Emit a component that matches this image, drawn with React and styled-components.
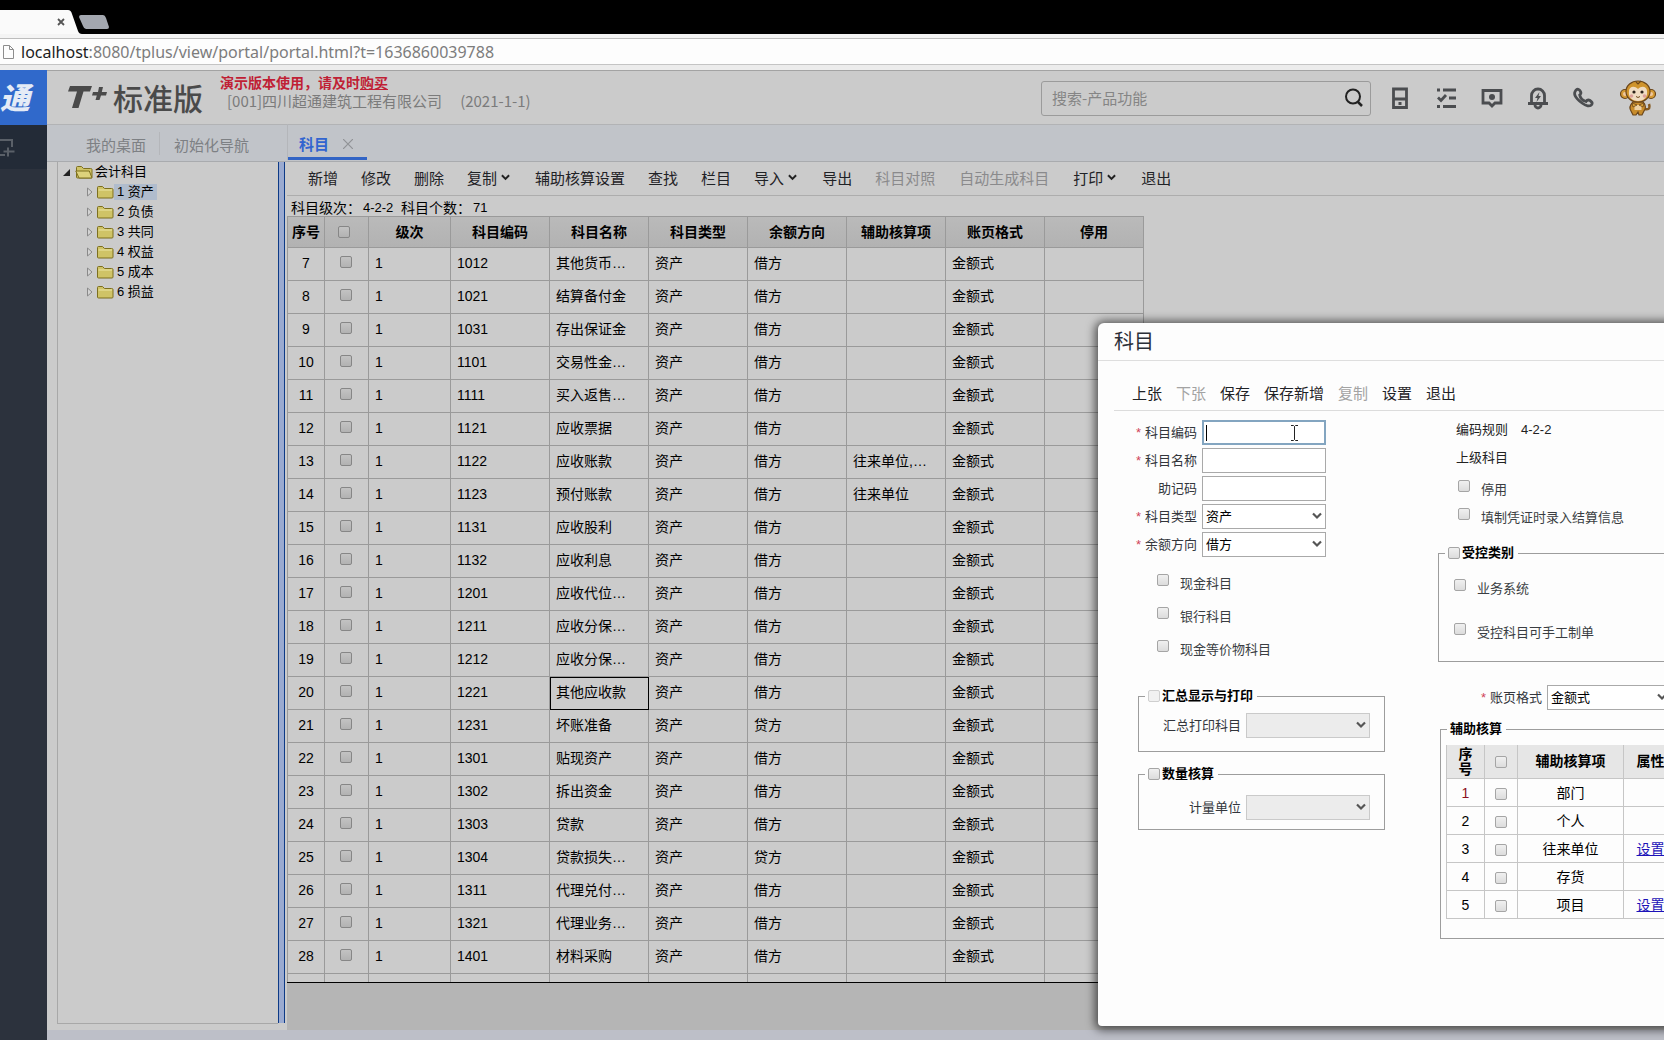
import styled, { createGlobalStyle, css } from 'styled-components';

const GlobalStyle = createGlobalStyle`
	* {
		box-sizing: border-box;
	}
	body {
		margin: 0;
		background: #cbcbcb;
		overflow: hidden;
	}
	body, button, input, select, table {
		font-family: 'Liberation Sans', 'Noto Sans CJK SC', sans-serif;
	}
`;

const ui = "'Noto Sans CJK SC', 'Noto Sans', sans-serif";

/* ---------- browser frame ---------- */

const StyledPage = styled.div`
	position: relative;
	display: flex;
	flex-direction: column;
	height: 100vh;
	overflow: hidden;
	color: #000;
	background: #cbcbcb;
`;
const StyledTabBar = styled.div`
	display: flex;
	height: 34px;
	background: #000;
`;
const StyledAddressBar = styled.div`
	display: flex;
	align-items: center;
	gap: 6px;
	height: 36px;
	padding-left: 2px;
	border-top: 4px solid #f4f4f4;
	border-bottom: 5px solid #ececec;
	background: #fdfdfd;
	box-shadow: inset 0 1px #bdbdbd, inset 0 -1px #c4c4c4, 0 1px #a3a3a3;
`;
const StyledAddress = styled.input`
	flex: 1;
	padding: 0;
	border: 0;
	outline: 0;
	background: transparent;
`;
const StyledUrl = styled.div`
	font: 16px/24px 'Noto Sans', sans-serif;
	color: #7c7c7c;

	b {
		font-weight: 400;
		color: #1c1c1c;
	}
`;

/* ---------- shell ---------- */

const StyledShell = styled.div`
	display: flex;
	flex: 1;
	min-height: 0;
`;
const StyledSidebar = styled.aside`
	flex: 0 0 47px;
	background: #2c323d;
`;
const StyledLogo = styled.div`
	display: flex;
	align-items: center;
	height: 55px;
	padding-bottom: 3px;
	background: #3069cb;
	color: #e4ebf6;
	font: italic 900 30px/30px ${ui};
`;
const StyledSideButton = styled.button`
	display: block;
	width: 100%;
	height: 44px;
	padding: 4px 0 0;
	border: 0;
	text-align: left;
	background: #232b37;
`;
const StyledMain = styled.main`
	display: flex;
	flex: 1;
	flex-direction: column;
	min-width: 0;
`;
const StyledHeader = styled.header`
	display: flex;
	align-items: center;
	height: 55px;
	padding: 2px 8px 0 21px;
	border-bottom: 1px solid #b2b3b5;
	font-family: ${ui};
`;
const StyledBrand = styled.div`
	display: flex;
	align-items: center;
	width: 152px;
	padding-bottom: 2px;
	color: #4a4a4a;
	font: 500 30px/30px ${ui};
	white-space: nowrap;

	svg {
		margin-right: 6px;
	}
`;
const StyledCompany = styled.div`
	padding-bottom: 12px;
	color: #7b7b7b;
	font-size: 15px;
	line-height: 20px;
	white-space: nowrap;

	p {
		display: flex;
		gap: 18px;
		margin: 0;
		padding-left: 7px;
	}
`;
const StyledNotice = styled.div`
	color: #c01f35;
	font-size: 14px;
	font-weight: 700;
	line-height: 18px;

	a {
		color: inherit;
	}
`;
const StyledSearch = styled.div`
	display: flex;
	align-items: center;
	width: 330px;
	height: 35px;
	margin-left: auto;
	margin-right: 17px;
	padding: 0 4px 0 10px;
	border: 1px solid #9b9b9b;
	border-radius: 3px;

	input {
		flex: 1;
		min-width: 0;
		padding: 0;
		border: 0;
		outline: 0;
		background: transparent;
		font: 15px/20px ${ui};
	}
	input::placeholder {
		color: #858585;
	}
`;
const StyledIconButton = styled.button`
	display: flex;
	align-items: center;
	justify-content: center;
	width: 24px;
	height: 24px;
	padding: 0;
	border: 0;
	background: transparent;
	color: #4b4d50;
`;
const StyledActions = styled.div`
	display: flex;
	align-items: center;
	gap: 22px;
	margin-right: 24px;
`;
const StyledTabs = styled.nav`
	display: flex;
	align-items: center;
	height: 37px;
	padding-left: 25px;
	border-bottom: 1px solid #a9abae;
	background: #c1c4c9;
`;
const StyledTab = styled.button`
	display: flex;
	align-items: center;
	gap: 14px;
	padding: 3px 14px 0;
	border: 0;
	background: transparent;
	color: #7d8084;
	font: 15px/20px ${ui};

	& + & {
		box-shadow: -1px 0 #b4b6ba;
	}
	${({ $active }) => $active && css`
		align-self: flex-end;
		height: 36px;
		padding: 6px 14px 0 11px;
		margin-left: 25px;
		margin-bottom: 1px;
		border-bottom: 3px solid #3264c5;
		color: #3264d0;
		font-weight: 700;
	`}
`;
const StyledWorkspace = styled.div`
	display: flex;
	flex: 1;
	min-height: 0;
	padding-left: 10px;
`;
const StyledStatusBar = styled.footer`
	height: 10px;
	background: #bdbfc8;
`;

/* ---------- account tree ---------- */

const StyledTree = styled.div`
	width: 221px;
	margin-bottom: 6px;
	border-left: 1px solid #a8a8a8;
	border-bottom: 1px solid #a8a8a8;
	font-size: 13px;
	line-height: 16px;
`;
const StyledTreeRow = styled.div`
	display: flex;
	align-items: center;
	height: 20px;
	padding-left: ${({ $child }) => ($child ? 28 : 4)}px;

	svg {
		flex: none;
	}
	span {
		padding: 0 ${({ $child }) => ($child ? 3 : 2)}px;
		background: ${({ $selected }) => ($selected ? '#b0bccd' : 'transparent')};
	}
`;
const StyledSplitter = styled.div`
	width: 7px;
	margin: 0 2px 7px 0;
	border: solid #0d3a86;
	border-width: 0 1px;
	background: #9aaad0;
`;

/* ---------- grid ---------- */

const StyledContent = styled.section`
	display: flex;
	flex: 1;
	flex-direction: column;
	min-width: 0;
`;
const StyledToolbar = styled.div`
	display: flex;
	align-items: center;
	gap: ${({ $gap }) => $gap}px;
	height: 34px;
	padding: 0 0 2px 21px;
	border-bottom: 1px solid #adadad;
`;
const StyledToolButton = styled.button`
	display: flex;
	align-items: center;
	gap: 4px;
	padding: 0 ${({ $wide }) => ($wide ? 1 : 0)}px;
	border: 0;
	background: transparent;
	color: #1f2226;
	font: 15px/20px ${ui};
	white-space: nowrap;

	&:disabled {
		color: ${({ $muted }) => $muted || '#8a8a8c'};
	}
	svg {
		margin-right: 2px;
	}
`;
const StyledInfo = styled.div`
	display: flex;
	height: 20px;
	padding: 3px 4px 0;
	font-size: 14px;
	line-height: 18px;
	white-space: nowrap;

	output {
		width: 38px;
		margin-left: 2px;
		font-size: 13px;
	}
`;
const StyledGridBox = styled.div`
	flex: 1;
	min-height: 0;
	overflow: hidden;
	border-bottom: 1px solid #000;
`;
const StyledFiller = styled.div`
	flex: 0 0 47px;
	background: #b5b5b5;
`;
const StyledTable = styled.table`
	border-collapse: separate;
	border-spacing: 0;
	table-layout: fixed;
	width: ${({ $width }) => $width}px;
	font-size: 14px;
	line-height: 20px;
`;
const StyledHead = styled.th`
	height: 32px;
	padding: 0;
	border: solid #9a9a9a;
	border-width: 1px 1px 1px 0;
	background: linear-gradient(#bababa, #b2b2b2);

	&:first-child {
		border-left-width: 1px;
	}
`;
const StyledCell = styled.td`
	height: ${({ $first }) => ($first ? 32 : 33)}px;
	padding: 0 6px 3px;
	border: solid #9a9a9a;
	border-width: 0 1px 1px 0;
	text-align: ${({ $center }) => ($center ? 'center' : 'left')};
	white-space: nowrap;

	&:first-child {
		border-left-width: 1px;
	}
	${({ $focused }) => $focused && css`
		outline: 1px solid #000;
		outline-offset: -1px;
	`}
`;
const StyledCheck = styled.input.attrs({ type: 'checkbox' })`
	appearance: none;
	flex: none;
	width: 12px;
	height: 12px;
	margin: ${({ $dim }) => ($dim ? '0 2px 3px 0' : 0)};
	vertical-align: middle;
	border: 1px solid ${({ $dim }) => ($dim ? '#868686' : '#a5a5a5')};
	border-radius: 2px;
	background: ${({ $dim }) => ($dim ? 'linear-gradient(#c3c3c3, #b2b2b2)' : 'linear-gradient(#f0f0f0, #dcdcdc)')};

	${StyledHead} & {
		margin-right: 6px;
	}
	&:disabled {
		border-color: #cfcfcf;
		background: #f1f1f1;
	}
`;

/* ---------- dialog ---------- */

const StyledDialog = styled.div`
	position: absolute;
	top: 323px;
	left: 1098px;
	width: 740px;
	height: 703px;
	border-radius: 6px 6px 4px 4px;
	background: #fdfdfd;
	box-shadow: 0 1px 10px 3px rgba(0, 0, 0, 0.6);
`;
const StyledTitle = styled.h1`
	height: 38px;
	margin: 0;
	padding-left: 16px;
	border-bottom: 1px solid #dedede;
	color: #2b2f38;
	font: 400 20px/36px ${ui};
`;
const StyledDialogTools = styled(StyledToolbar)`
	height: 50px;
	margin-left: 16px;
	padding: 14px 0 0 18px;
	border-bottom: 1px solid #dcdcdc;
`;
const StyledForm = styled.form`
	display: grid;
	grid-template-columns: 324px 1fr;
	margin-left: 16px;
	font-size: 13px;
	line-height: 16px;
`;
const StyledColumn = styled.div`
	padding-top: ${({ $top }) => $top}px;
`;
const StyledField = styled.div`
	display: flex;
	align-items: center;
	height: 25px;
	margin-bottom: 3px;
`;
const StyledLabel = styled.label`
	width: ${({ $width }) => $width || 83}px;
	margin-right: 5px;
	color: #33363c;
	text-align: right;

	i {
		margin-right: 4px;
		color: #d0435a;
		font-style: normal;
	}
`;
const StyledControl = styled.div`
	position: relative;
	width: 124px;
	height: 25px;

	> svg {
		position: absolute;
		top: 7px;
		right: 4px;
		pointer-events: none;
	}
`;
const controlBox = css`
	width: 100%;
	height: 100%;
	padding: 0 3px;
	border: 1px solid #a9a9a9;
	border-radius: 0;
	outline: 0;
	background: #fff;
	font-size: 13px;
`;
const StyledInput = styled.input`
	${controlBox}
	${({ $focused }) => $focused && css`
		border: 2px solid #83a5c0;
	`}
`;
const StyledSelect = styled.select`
	${controlBox}
	appearance: none;
	color: #000;

	&:disabled {
		border-color: #b5b5b5;
		background: #e5e5e5;
	}
`;
const StyledPointer = styled.span`
	position: absolute;
	top: 4px;
	left: 4px;
	display: flex;
	align-items: center;
	justify-content: space-between;
	width: 93px;
	height: 18px;
	pointer-events: none;
`;
const StyledCheckRow = styled.label`
	display: flex;
	align-items: center;
	gap: 11px;
	height: ${({ $height }) => $height}px;
	padding-left: ${({ $indent }) => $indent}px;
	color: #3a3d42;

	input {
		margin-bottom: 8px;
	}
`;
const StyledText = styled.div`
	display: flex;
	align-items: center;
	gap: 13px;
	height: 28px;
	padding-left: 18px;
	color: #222;
`;
const StyledFieldset = styled.fieldset`
	width: ${({ $width }) => $width}px;
	height: ${({ $height }) => $height}px;
	min-width: 0;
	margin: ${({ $margin }) => $margin};
	padding: ${({ $padding }) => $padding || 0};
	border: 1px solid #9d9d9d;

	legend {
		display: flex;
		align-items: center;
		gap: 2px;
		height: 16px;
		margin-left: 6px;
		padding: 0 4px 0 3px;
		font-weight: 700;
	}
`;
const StyledAuxTable = styled(StyledTable)`
	margin-left: 5px;

	th {
		height: 34px;
		padding: 0;
		border: solid #c6c6c6;
		border-width: 0 1px 1px 0;
		background: #e6e6e6;
		line-height: 15px;
	}
	td {
		height: 28px;
		padding: 0;
		border: solid #c6c6c6;
		border-width: 0 1px 1px 0;
		text-align: center;
	}
	th:first-child, td:first-child {
		border-left-width: 1px;
	}
	tr:first-child td:first-child {
		color: #8c1020;
	}
	a {
		color: #1c12b8;
	}
`;

/* ---------- data ---------- */

const tools = [
	{ label: '新增' },
	{ label: '修改' },
	{ label: '删除' },
	{ label: '复制', menu: true },
	{ label: '辅助核算设置' },
	{ label: '查找' },
	{ label: '栏目' },
	{ label: '导入', menu: true },
	{ label: '导出' },
	{ label: '科目对照', disabled: true },
	{ label: '自动生成科目', disabled: true, wide: true },
	{ label: '打印', menu: true },
	{ label: '退出' },
];

const dialogTools = [
	{ label: '上张' },
	{ label: '下张', disabled: true },
	{ label: '保存' },
	{ label: '保存新增' },
	{ label: '复制', disabled: true },
	{ label: '设置' },
	{ label: '退出' },
];

const treeItems = ['1 资产', '2 负债', '3 共同', '4 权益', '5 成本', '6 损益'];

const columns = ['级次', '科目编码', '科目名称', '科目类型', '余额方向', '辅助核算项', '账页格式', '停用'];

const accounts = [
	['7', '1012', '其他货币…', '借方'],
	['8', '1021', '结算备付金', '借方'],
	['9', '1031', '存出保证金', '借方'],
	['10', '1101', '交易性金…', '借方'],
	['11', '1111', '买入返售…', '借方'],
	['12', '1121', '应收票据', '借方'],
	['13', '1122', '应收账款', '借方', '往来单位,…'],
	['14', '1123', '预付账款', '借方', '往来单位'],
	['15', '1131', '应收股利', '借方'],
	['16', '1132', '应收利息', '借方'],
	['17', '1201', '应收代位…', '借方'],
	['18', '1211', '应收分保…', '借方'],
	['19', '1212', '应收分保…', '借方'],
	['20', '1221', '其他应收款', '借方'],
	['21', '1231', '坏账准备', '贷方'],
	['22', '1301', '贴现资产', '借方'],
	['23', '1302', '拆出资金', '借方'],
	['24', '1303', '贷款', '借方'],
	['25', '1304', '贷款损失…', '贷方'],
	['26', '1311', '代理兑付…', '借方'],
	['27', '1321', '代理业务…', '借方'],
	['28', '1401', '材料采购', '借方'],
];

const auxItems = [
	['部门', ''],
	['个人', ''],
	['往来单位', '设置'],
	['存货', ''],
	['项目', '设置'],
];

/* ---------- drawings ---------- */

const Chevron = ({ width = 9, color = '#222' }) => (
	<svg width={width} height={width} viewBox="0 0 10 10" fill="none" stroke={color} strokeWidth="2.200">
		<path d="M1 2.500l4 4 4-4" />
	</svg>
);

const BrowserTab = () => (
	<svg width="112" height="34" viewBox="0 0 112 34">
		<path d="M0 10h68q3 0 4 4l6 17q1 3 4 3H0z" fill="#fafafa" />
		<path d="M58 19l6 6m0-6l-6 6" stroke="#555" strokeWidth="1.800" />
		<path d="M81 15h22q2 0 3 3l3 9q0 2-2 2H86q-2 0-3-3l-4-9q0-2 2-2z" fill="#a3a7af" />
	</svg>
);

const PageIcon = () => (
	<svg width="13" height="16" viewBox="0 0 13 16" fill="none" stroke="#8d8d8d">
		<path d="M1.500 1.500h6l4 4v9h-10zM7.500 1.500v4h4" />
	</svg>
);

const BrandMark = () => (
	<svg width="39" height="24" viewBox="0 0 39 24" fill="#4a4a4a">
		<path d="M2 1h22l-2 5.500h-6.500L10.500 23H4L9 6.500H0z" />
		<path d="M31 2h4l-1.200 5H39l-1 3.500h-5L31.500 15h-4l1.300-4.500H24L25 7h5z" />
	</svg>
);

const FolderIcon = ({ open }) => (
	<svg width="18" height="16" viewBox="0 0 18 16" stroke="#7c6f1f">
		<path d="M1.500 13V3.500q0-1 1-1h4l2 2h7q1.500 0 1.500 1V13q0 1-1 1h-13.500q-1 0-1-1z" fill="#cfc367" />
		{open ? (
			<path d="M.8 7h13.500l2.700 7H4z" fill="#ddd27c" />
		) : (
			<path d="M2.500 6h13.500" stroke="#ece5a6" />
		)}
	</svg>
);

const ExpandedIcon = () => (
	<svg width="13" height="10" viewBox="0 0 13 10">
		<path d="M8 2v7H1z" fill="#222" />
	</svg>
);

const CollapsedIcon = () => (
	<svg width="10" height="10" viewBox="0 0 10 10">
		<path d="M1.500 1v8L6 5z" fill="#d4d4d4" stroke="#8a8a8a" />
	</svg>
);

const AddFrameIcon = () => (
	<svg width="15" height="20" viewBox="0 0 15 20" fill="none" stroke="#5a6068" strokeWidth="2">
		<path d="M0 2h12v7M0 17h5M8 9.500v9M3.500 13.500h11" />
	</svg>
);

const SearchIcon = () => (
	<svg width="20" height="22" viewBox="0 0 20 22" fill="none" stroke="#222" strokeWidth="2">
		<circle cx="9" cy="9.500" r="7" />
		<path d="M14 15l4 4" strokeWidth="2.500" />
	</svg>
);

const headerIcons = [
	{
		label: '手机端',
		art: <path d="M5.500 3h13v18.500h-13zM5.500 13h13M10.500 17.500h3" />,
	},
	{
		label: '待办',
		art: <path d="M9 4h13M3 4h3M15 12h7M9 20.500h13M3 20.500h3M4 11.500l3 3L12 9" />,
	},
	{
		label: '消息',
		art: (
			<>
				<path d="M3 4.500h18V17h-6l-3 3-3-3H3z" />
				<circle cx="12" cy="11" r="3" fill="currentColor" stroke="none" />
			</>
		),
	},
	{
		label: '提醒',
		art: (
			<>
				<path d="M5.500 17.500V9.500a6.500 6.500 0 0 1 13 0v8M2 17.500h20" />
				<path d="M9 19a3 3 0 0 0 6 0" />
				<path d="M13.500 6L9 12h2.500l-1 4 4.500-6h-2.500z" fill="currentColor" stroke="none" />
			</>
		),
	},
	{
		label: '电话',
		art: <path d="M4 4c2-1.500 3.500-.5 4.500 1.500.8 1.500.5 2.500-.8 3.500.6 3 3 5.500 6.300 6.500 1-1.500 2.500-2 4-1s3 2 1.800 4c-1.800 2.500-5.800 1.500-9.800-1.500S4 12 3 9.500 2.800 5.500 4 4z" />,
	},
];

const Monkey = () => (
	<svg width="36" height="36" viewBox="0 0 36 36" stroke="#6b461b" strokeWidth="1.200">
		<path d="M25 29c5 1 5-2 4-5" fill="none" stroke="#85591f" strokeWidth="2.500" />
		<circle cx="5" cy="14" r="4.500" fill="#d59b35" />
		<circle cx="31" cy="14" r="4.500" fill="#d59b35" />
		<circle cx="5" cy="14" r="2" fill="#efc8a0" stroke="none" />
		<circle cx="31" cy="14" r="2" fill="#efc8a0" stroke="none" />
		<path d="M13 22h10c3 3 3 7 1 9l-2 4h-3l-1-3-2 3h-3l-2-4c-2-3-1-6 2-9z" fill="#c88c2b" />
		<path d="M14.500 25h7v5h-7z" fill="#ecd0a2" stroke="none" />
		<ellipse cx="18" cy="11.500" rx="12" ry="10.500" fill="#cf942d" />
		<path d="M9 11c0-4 5-6 9-2 4-4 9-2 9 2 1 6-3 10-9 10s-10-4-9-10z" fill="#f0dcc2" stroke="none" />
		<circle cx="14" cy="12" r="1.600" fill="#2b2119" stroke="none" />
		<circle cx="22" cy="12" r="1.600" fill="#2b2119" stroke="none" />
		<circle cx="11.500" cy="16" r="1.800" fill="#dda09a" stroke="none" />
		<circle cx="24.500" cy="16" r="1.800" fill="#dda09a" stroke="none" />
		<path d="M16 16.500q2 2 4 0" fill="none" strokeWidth="1" />
		<path d="M12 23l5 2-4 2zM24 23l-5 2 4 2z" fill="#e0a83c" strokeWidth=".8" />
		<path d="M16 2l2 2 3-3" fill="none" />
	</svg>
);

/* ---------- parts ---------- */

const Toolbar = ({ items, as: Bar = StyledToolbar, gap, muted }) => (
	<Bar $gap={gap}>
		{items.map(({ label, menu, disabled, wide }) => (
			<StyledToolButton key={label} type="button" disabled={disabled} $wide={wide} $muted={muted}>
				{label}
				{menu && <Chevron />}
			</StyledToolButton>
		))}
	</Bar>
);

const SelectField = ({ id, label, value, required, width, disabled }) => (
	<StyledField>
		<StyledLabel htmlFor={id} $width={width}>
			{required && <i>*</i>}
			{label}
		</StyledLabel>
		<StyledControl>
			<StyledSelect id={id} disabled={disabled}>
				<option>{value}</option>
			</StyledSelect>
			<Chevron width={10} color="#555" />
		</StyledControl>
	</StyledField>
);

const TextField = ({ id, label, required, focused }) => (
	<StyledField>
		<StyledLabel htmlFor={id}>
			{required && <i>*</i>}
			{label}
		</StyledLabel>
		<StyledControl>
			<StyledInput id={id} $focused={focused} />
			{focused && (
				<StyledPointer>
					<svg width="2" height="16" viewBox="0 0 2 16">
						<path d="M.5 0v16" stroke="#000" />
					</svg>
					<svg width="9" height="18" viewBox="0 0 9 18" fill="none" stroke="#222">
						<path d="M1 1.500h2.500l1 1 1-1H8M1 16.500h2.500l1-1 1 1H8M4.500 2.500v13" />
					</svg>
				</StyledPointer>
			)}
		</StyledControl>
	</StyledField>
);

const CheckRow = ({ label, height, indent }) => (
	<StyledCheckRow $height={height} $indent={indent}>
		<StyledCheck />
		{label}
	</StyledCheckRow>
);

const Header = () => (
	<StyledHeader>
		<StyledBrand>
			<BrandMark />
			标准版
		</StyledBrand>
		<StyledCompany>
			<StyledNotice>
				演示版本使用，请及时<a href="#buy">购买</a>
			</StyledNotice>
			<p>
				<span>[001]四川超通建筑工程有限公司</span>
				<span>(2021-1-1)</span>
			</p>
		</StyledCompany>
		<StyledSearch>
			<input aria-label="搜索" placeholder="搜索-产品功能" />
			<StyledIconButton type="button" aria-label="搜索">
				<SearchIcon />
			</StyledIconButton>
		</StyledSearch>
		<StyledActions>
			{headerIcons.map(({ label, art }) => (
				<StyledIconButton key={label} type="button" aria-label={label}>
					<svg width="24" height="24" viewBox="0 0 24 24" fill="none" stroke="currentColor" strokeWidth="2.800">
						{art}
					</svg>
				</StyledIconButton>
			))}
		</StyledActions>
		<Monkey />
	</StyledHeader>
);

const AccountTree = () => (
	<StyledTree>
		<StyledTreeRow>
			<ExpandedIcon />
			<FolderIcon open />
			<span>会计科目</span>
		</StyledTreeRow>
		{treeItems.map((item, index) => (
			<StyledTreeRow key={item} $child $selected={index === 0}>
				<CollapsedIcon />
				<FolderIcon />
				<span>{item}</span>
			</StyledTreeRow>
		))}
	</StyledTree>
);

const AccountGrid = () => (
	<StyledTable $width={857}>
		<colgroup>
			<col width="38" />
			<col width="44" />
			<col width="82" />
			{columns.slice(1).map(name => (
				<col key={name} width="99" />
			))}
		</colgroup>
		<thead>
			<tr>
				<StyledHead>序号</StyledHead>
				<StyledHead>
					<StyledCheck $dim aria-label="全选" />
				</StyledHead>
				{columns.map(name => (
					<StyledHead key={name}>{name}</StyledHead>
				))}
			</tr>
		</thead>
		<tbody>
			{accounts.map(([no, code, name, side, aux], index) => (
				<tr key={no}>
					<StyledCell $center $first={index === 0}>{no}</StyledCell>
					<StyledCell $center>
						<StyledCheck $dim aria-label={code} />
					</StyledCell>
					<StyledCell>1</StyledCell>
					<StyledCell>{code}</StyledCell>
					<StyledCell $focused={code === '1221'}>{name}</StyledCell>
					<StyledCell>资产</StyledCell>
					<StyledCell>{side}</StyledCell>
					<StyledCell>{aux}</StyledCell>
					<StyledCell>金额式</StyledCell>
					<StyledCell />
				</tr>
			))}
			<tr>
				{Array.from({ length: 10 }, (_, index) => (
					<StyledCell key={index} />
				))}
			</tr>
		</tbody>
	</StyledTable>
);

const AccountDialog = () => (
	<StyledDialog role="dialog" aria-label="科目">
		<StyledTitle>科目</StyledTitle>
		<Toolbar as={StyledDialogTools} items={dialogTools} gap={14} muted="#a3a3a3" />
		<StyledForm>
			<StyledColumn $top={9}>
				<TextField id="code" label="科目编码" required focused />
				<TextField id="name" label="科目名称" required />
				<TextField id="mnemonic" label="助记码" />
				<SelectField id="type" label="科目类型" value="资产" required />
				<SelectField id="side" label="余额方向" value="借方" required />
				<StyledColumn $top={7}>
					<CheckRow label="现金科目" height={33} indent={43} />
					<CheckRow label="银行科目" height={33} indent={43} />
					<CheckRow label="现金等价物科目" height={33} indent={43} />
				</StyledColumn>
				<StyledFieldset $width={247} $height={64} $margin="22px 0 14px 24px" $padding="9px 0 0">
					<legend>
						<StyledCheck id="summary" disabled />
						<label htmlFor="summary">汇总显示与打印</label>
					</legend>
					<SelectField id="summary-item" label="汇总打印科目" width={102} disabled />
				</StyledFieldset>
				<StyledFieldset $width={247} $height={64} $margin="0 0 0 24px" $padding="13px 0 0">
					<legend>
						<StyledCheck id="quantity" />
						<label htmlFor="quantity">数量核算</label>
					</legend>
					<SelectField id="unit" label="计量单位" width={102} disabled />
				</StyledFieldset>
			</StyledColumn>
			<StyledColumn $top={5}>
				<StyledText>
					<span>编码规则</span>
					<span>4-2-2</span>
				</StyledText>
				<StyledText>上级科目</StyledText>
				<StyledColumn $top={4}>
					<CheckRow label="停用" height={28} indent={20} />
					<CheckRow label="填制凭证时录入结算信息" height={28} indent={20} />
				</StyledColumn>
				<StyledFieldset $height={117} $margin="13px 16px 23px 0" $padding="6px 0 0">
					<legend>
						<StyledCheck id="controlled" />
						<label htmlFor="controlled">受控类别</label>
					</legend>
					<CheckRow label="业务系统" height={44} indent={15} />
					<CheckRow label="受控科目可手工制单" height={44} indent={15} />
				</StyledFieldset>
				<SelectField id="format" label="账页格式" value="金额式" width={104} required />
				<StyledFieldset $height={218} $margin="11px 16px 0 2px" $padding="8px 0 0">
					<legend>辅助核算</legend>
					<StyledAuxTable $width={232}>
						<colgroup>
							<col width="39" />
							<col width="33" />
							<col width="106" />
							<col width="54" />
						</colgroup>
						<thead>
							<tr>
								<th>序<br />号</th>
								<th>
									<StyledCheck aria-label="全选辅助核算" />
								</th>
								<th>辅助核算项</th>
								<th>属性</th>
							</tr>
						</thead>
						<tbody>
							{auxItems.map(([name, link], index) => (
								<tr key={name}>
									<td>{index + 1}</td>
									<td>
										<StyledCheck aria-label={name} />
									</td>
									<td>{name}</td>
									<td>{link && <a href="#settings">{link}</a>}</td>
								</tr>
							))}
						</tbody>
					</StyledAuxTable>
				</StyledFieldset>
			</StyledColumn>
		</StyledForm>
	</StyledDialog>
);

const App = () => (
	<StyledPage>
		<GlobalStyle />
		<StyledTabBar>
			<BrowserTab />
		</StyledTabBar>
		<StyledAddressBar>
			<PageIcon />
			<StyledUrl>
				<b>localhost</b>:8080/tplus/view/portal/portal.html?t=1636860039788
			</StyledUrl>
			<StyledAddress aria-label="地址" />
		</StyledAddressBar>
		<StyledShell>
			<StyledSidebar>
				<StyledLogo>通</StyledLogo>
				<StyledSideButton type="button" aria-label="展开">
					<AddFrameIcon />
				</StyledSideButton>
			</StyledSidebar>
			<StyledMain>
				<Header />
				<StyledTabs>
					<StyledTab>我的桌面</StyledTab>
					<StyledTab>初始化导航</StyledTab>
					<StyledTab $active>
						科目
						<svg width="10" height="10" viewBox="0 0 10 10" stroke="#909296" strokeWidth="1.200">
							<path d="M0 0l10 10M10 0L0 10" />
						</svg>
					</StyledTab>
				</StyledTabs>
				<StyledWorkspace>
					<AccountTree />
					<StyledSplitter />
					<StyledContent>
						<Toolbar items={tools} gap={23} />
						<StyledInfo>
							科目级次：
							<output>4-2-2</output>
							科目个数：
							<output>71</output>
						</StyledInfo>
						<StyledGridBox>
							<AccountGrid />
						</StyledGridBox>
						<StyledFiller />
					</StyledContent>
				</StyledWorkspace>
				<StyledStatusBar />
			</StyledMain>
		</StyledShell>
		<AccountDialog />
	</StyledPage>
);

export default App;
